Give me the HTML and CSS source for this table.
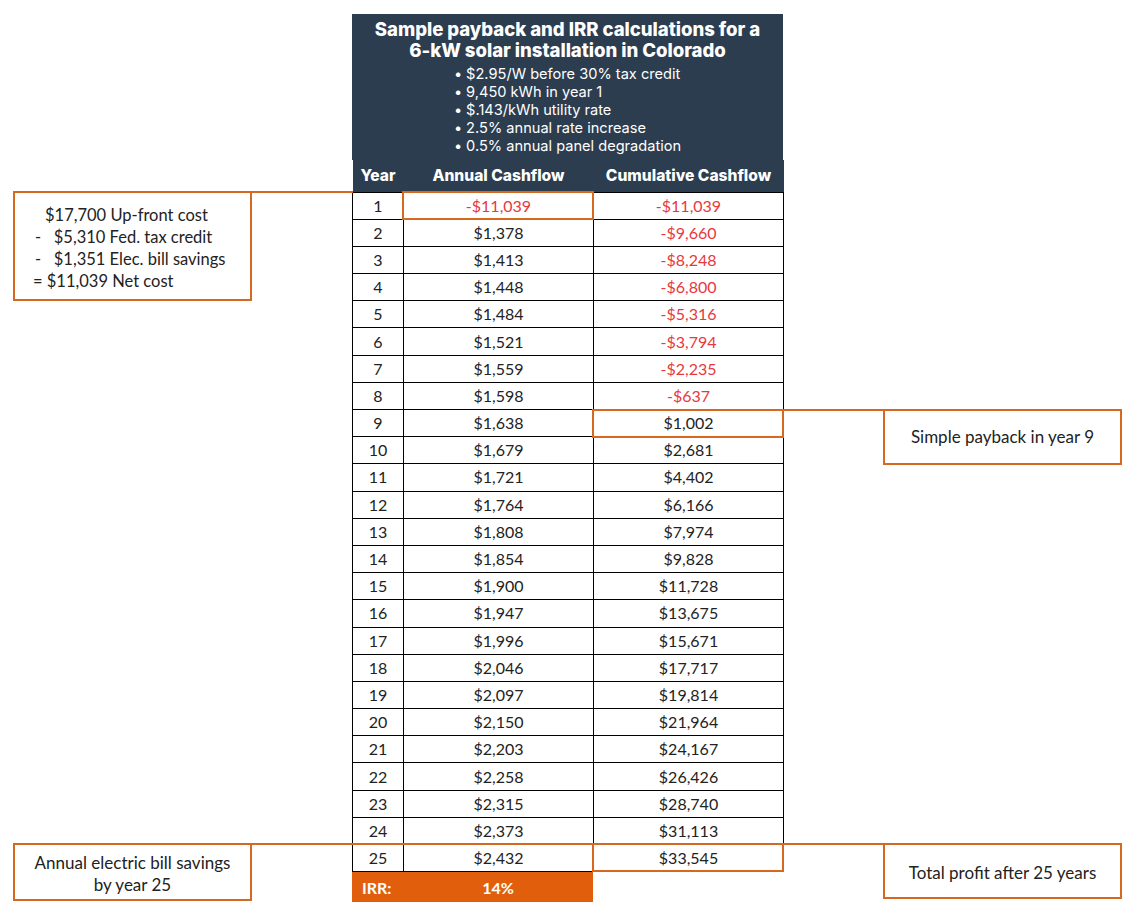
FILE: index.html
```html
<!DOCTYPE html>
<html>
<head>
<meta charset="utf-8">
<link rel="stylesheet" href="styles.css">
</head>
<body>
<div class="page">
  <div class="sheet">
    <div class="head">
      <div class="title">Sample payback and IRR calculations for a<br>6-kW solar installation in Colorado</div>
      <ul class="bullets">
        <li>$2.95/W before 30% tax credit</li>
        <li>9,450 kWh in year 1</li>
        <li>$.143/kWh utility rate</li>
        <li>2.5% annual rate increase</li>
        <li>0.5% annual panel degradation</li>
      </ul>
    </div>
    <table class="cash">
      <colgroup><col class="c1"><col class="c2"><col class="c3"></colgroup>
      <thead>
        <tr><th>Year</th><th>Annual Cashflow</th><th>Cumulative Cashflow</th></tr>
      </thead>
      <tbody>
        <tr><td>1</td><td class="neg">-$11,039</td><td class="neg">-$11,039</td></tr>
        <tr><td>2</td><td>$1,378</td><td class="neg">-$9,660</td></tr>
        <tr><td>3</td><td>$1,413</td><td class="neg">-$8,248</td></tr>
        <tr><td>4</td><td>$1,448</td><td class="neg">-$6,800</td></tr>
        <tr><td>5</td><td>$1,484</td><td class="neg">-$5,316</td></tr>
        <tr><td>6</td><td>$1,521</td><td class="neg">-$3,794</td></tr>
        <tr><td>7</td><td>$1,559</td><td class="neg">-$2,235</td></tr>
        <tr><td>8</td><td>$1,598</td><td class="neg">-$637</td></tr>
        <tr><td>9</td><td>$1,638</td><td>$1,002</td></tr>
        <tr><td>10</td><td>$1,679</td><td>$2,681</td></tr>
        <tr><td>11</td><td>$1,721</td><td>$4,402</td></tr>
        <tr><td>12</td><td>$1,764</td><td>$6,166</td></tr>
        <tr><td>13</td><td>$1,808</td><td>$7,974</td></tr>
        <tr><td>14</td><td>$1,854</td><td>$9,828</td></tr>
        <tr><td>15</td><td>$1,900</td><td>$11,728</td></tr>
        <tr><td>16</td><td>$1,947</td><td>$13,675</td></tr>
        <tr><td>17</td><td>$1,996</td><td>$15,671</td></tr>
        <tr><td>18</td><td>$2,046</td><td>$17,717</td></tr>
        <tr><td>19</td><td>$2,097</td><td>$19,814</td></tr>
        <tr><td>20</td><td>$2,150</td><td>$21,964</td></tr>
        <tr><td>21</td><td>$2,203</td><td>$24,167</td></tr>
        <tr><td>22</td><td>$2,258</td><td>$26,426</td></tr>
        <tr><td>23</td><td>$2,315</td><td>$28,740</td></tr>
        <tr><td>24</td><td>$2,373</td><td>$31,113</td></tr>
        <tr><td>25</td><td>$2,432</td><td>$33,545</td></tr>
      </tbody>
    </table>
    <div class="irr"><span class="irr-label">IRR:</span><span class="irr-val">14%</span></div>
  </div>

  <div class="note note-cost">
    <div class="cost-line l1">$17,700 Up-front cost</div>
    <div class="cost-line l2">-&nbsp;&nbsp; $5,310 Fed. tax credit</div>
    <div class="cost-line l2">-&nbsp;&nbsp; $1,351 Elec. bill savings</div>
    <div class="cost-line l3">= $11,039 Net cost</div>
  </div>
  <div class="link link-cost"></div>
  <div class="hl hl-y1"></div>

  <div class="hl hl-y9"></div>
  <div class="link link-pay"></div>
  <div class="note note-pay">Simple payback in year 9</div>

  <div class="link link-25"></div>
  <div class="hl hl-y25"></div>
  <div class="note note-sav">Annual electric bill savings<br>by year 25</div>
  <div class="note note-profit">Total profit after 25 years</div>
</div>
</body>
</html>
```

FILE: styles.css
```css
html, body {
  margin: 0;
  padding: 0;
  background: #ffffff;
}

.page {
  position: relative;
  width: 1136px;
  height: 920px;
  box-sizing: border-box;
  padding-top: 14px;
  font-family: "Source Sans Pro", Lato, "Liberation Sans", sans-serif;
  color: #222222;
}

.sheet {
  width: 431px;
  margin: 0 auto;
  position: relative;
  left: -0.5px;
}

.head {
  background: #2c3d4f;
  color: #ffffff;
  font-family: Inter, "Liberation Sans", sans-serif;
  text-align: center;
  padding-top: 5px;
  padding-bottom: 5px;
}

.title {
  font-size: 18.6px;
  font-weight: 800;
  line-height: 21px;
  letter-spacing: -0.05px;
}

.bullets {
  display: inline-block;
  text-align: left;
  margin: 4px 0 0;
  padding: 0;
  list-style: none;
  font-size: 14.6px;
  line-height: 18px;
}

.bullets li::before {
  content: "\2022";
  margin-right: 4px;
}

.cash {
  width: 431px;
  border-collapse: collapse;
  table-layout: fixed;
}

.c1 { width: 51px; }
.c2 { width: 190px; }
.c3 { width: 190px; }

.cash th {
  background: #2c3d4f;
  color: #ffffff;
  font-family: Inter, "Liberation Sans", sans-serif;
  font-size: 15.6px;
  font-weight: 800;
  height: 32px;
  padding: 0;
  box-sizing: border-box;
  border: none;
  text-align: center;
  vertical-align: middle;
}

.cash td {
  border: 1px solid #000000;
  height: 27.2px;
  padding: 0;
  text-align: center;
  vertical-align: middle;
  font-size: 16px;
  line-height: 18px;
  box-sizing: border-box;
}

.cash td.neg {
  color: #e8383d;
}

.irr {
  display: flex;
  width: 241px;
  height: 30px;
  background: #e15f0c;
  color: #ffffff;
  font-weight: 700;
  font-size: 16px;
  align-items: center;
}

.irr-label {
  width: 51px;
  padding-left: 10px;
  box-sizing: border-box;
}

.irr-val {
  width: 190px;
  text-align: center;
}

/* annotations drawn over the canvas */
.note {
  position: absolute;
  box-sizing: border-box;
  border: 2px solid #d5691f;
  background: #ffffff;
  font-size: 16.5px;
  line-height: 22px;
  text-align: center;
  display: flex;
  flex-direction: column;
  justify-content: center;
}

.note-cost {
  left: 13px;
  top: 191px;
  width: 239px;
  height: 110px;
  text-align: left;
  justify-content: flex-start;
  padding-top: 11px;
}

.cost-line.l1 { padding-left: 30px; }
.cost-line.l2 { padding-left: 20px; }
.cost-line.l3 { padding-left: 18px; }

.note-pay {
  left: 883px;
  top: 409px;
  width: 239px;
  height: 56px;
  font-size: 17px;
}

.note-sav {
  left: 13px;
  top: 843px;
  width: 239px;
  height: 58px;
  padding-top: 4px;
  font-size: 17px;
}

.note-profit {
  left: 883px;
  top: 843px;
  width: 239px;
  height: 56px;
  padding-top: 3px;
  font-size: 17px;
}

.link {
  position: absolute;
  height: 2px;
  background: #d5691f;
}

.link-cost {
  left: 252px;
  top: 191px;
  width: 101px;
}

.link-pay {
  left: 783px;
  top: 409px;
  width: 101px;
}

.link-25 {
  left: 252px;
  top: 843px;
  width: 632px;
}

.hl {
  position: absolute;
  box-sizing: border-box;
  border: 2px solid #d5691f;
  width: 192px;
  height: 29px;
}

.hl-y1 { left: 402px; top: 191px; }
.hl-y9 { left: 592px; top: 409px; }
.hl-y25 { left: 592px; top: 843px; }
```
